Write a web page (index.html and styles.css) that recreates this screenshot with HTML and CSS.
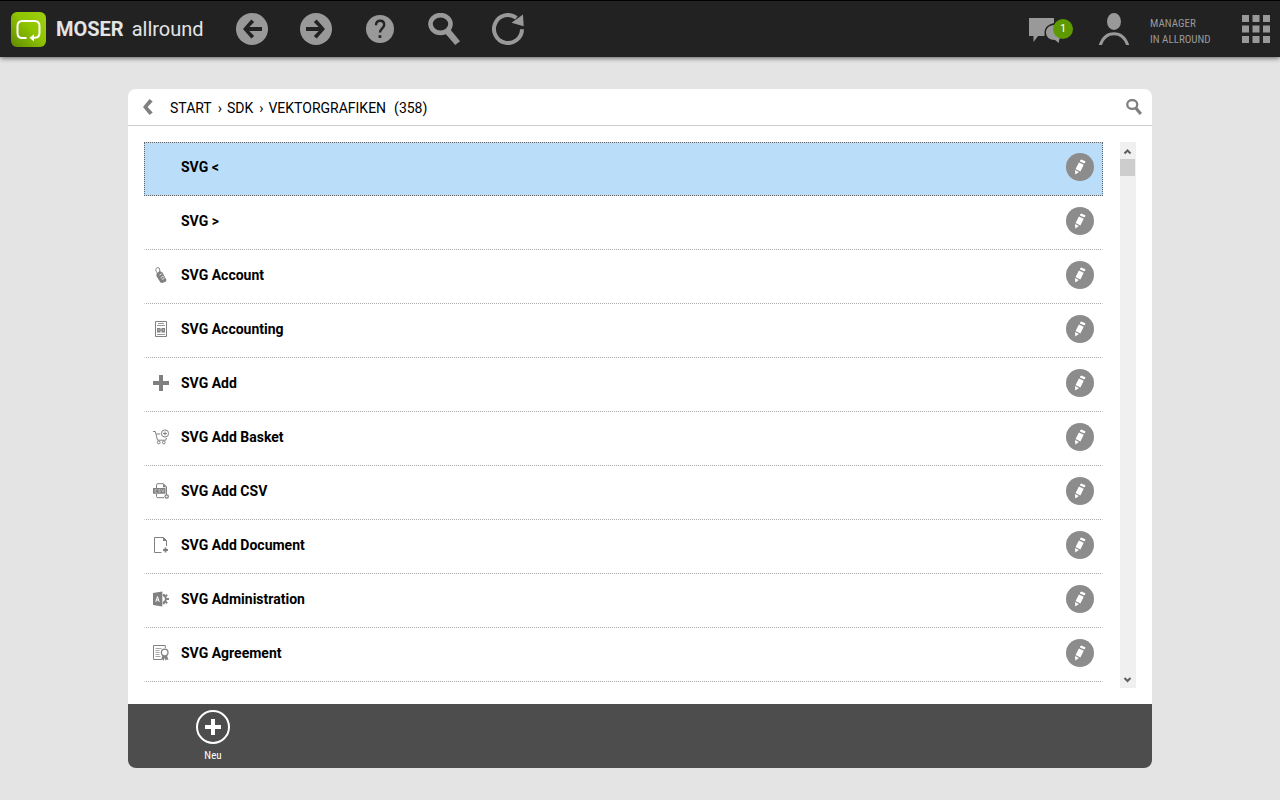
FILE: index.html
```html
<!DOCTYPE html>
<html lang="de">
<head>
    <meta charset="UTF-8">
    <meta name="viewport" content="width=device-width, initial-scale=1.0">
    <title>MOSER allround</title>
    <link rel="stylesheet" href="styles.css">
</head>
<body>
    <svg class="sprite" aria-hidden="true">
        <symbol id="pencil" viewBox="0 0 28 28">
            <path d="M14 7.400l1.300-1 4 1.900-.2 1.700-1.200.3-3.900-1.800z M12.900 9.400l4.800 2.300-3.300 6.700-4.800-2.300z M9 17l3.900 1.900-3.600 2.600z"/>
        </symbol>
        <symbol id="magnifier" viewBox="0 0 32 32">
            <ellipse cx="12.5" cy="11" rx="10" ry="8.9" fill="none" stroke="currentColor" stroke-width="4.6"/>
            <path d="M16.2 19.2l5.4-3.6 10.4 12.6-4.8 3.8z"/>
        </symbol>
    </svg>

    <header class="topbar">
        <a class="brand" href="#">
            <svg class="logo" viewBox="0 0 35 35" aria-hidden="true">
                <defs>
                    <linearGradient id="logoFill" x1="0" y1="1" x2="1" y2="0">
                        <stop offset="0" stop-color="#5f8a00"/>
                        <stop offset="0.55" stop-color="#8fc400"/>
                        <stop offset="1" stop-color="#9fd010"/>
                    </linearGradient>
                </defs>
                <rect width="35" height="35" rx="6" fill="url(#logoFill)"/>
                <path d="M15.500 26H11.500Q6.500 26 6.500 21V14Q6.500 9 11.500 9H23.500Q28.500 9 28.500 14V21Q28.500 25.500 24 25.700H21.500" fill="none" stroke="#fff" stroke-width="2"/>
                <path d="M18.500 25.800l4.500-3.600v7.200z" fill="#fff"/>
            </svg>
            <span class="brand-name"><strong>MOSER</strong> allround</span>
        </a>
        <nav class="tools">
            <button class="icon-button" type="button" aria-label="Zurück">
                <svg viewBox="0 0 32 32"><circle cx="16" cy="16" r="16"/><path class="dark" d="M26 14v4H13.300l4.900 5-2.900 2.500L7 16l8.300-9.500 2.900 2.500-4.900 5z"/></svg>
            </button>
            <button class="icon-button" type="button" aria-label="Vorwärts">
                <svg viewBox="0 0 32 32"><circle cx="16" cy="16" r="16"/><path class="dark" d="M6 14v4h12.700l-4.900 5 2.900 2.500L25 16l-8.300-9.500L13.800 9l4.900 5z"/></svg>
            </button>
            <button class="icon-button" type="button" aria-label="Hilfe">
                <svg viewBox="0 0 32 32"><circle cx="16" cy="16" r="14"/><path d="M12 12.200c0-3 1.600-4.500 4.100-4.500s4.100 1.500 4.100 4c0 3.600-4.200 3.700-4.200 7.800" fill="none" stroke="#222" stroke-width="2.400"/><rect class="dark" x="14.600" y="22.200" width="2.700" height="2.700"/></svg>
            </button>
            <button class="icon-button" type="button" aria-label="Suchen">
                <svg><use href="#magnifier"/></svg>
            </button>
            <button class="icon-button" type="button" aria-label="Aktualisieren">
                <svg viewBox="0 0 32 32"><path d="M30 16.200A14 14 0 1 1 24.500 4.900" fill="none" stroke="currentColor" stroke-width="4"/><path d="M31 1.500l.7 11.700-12.200-3.400z"/></svg>
            </button>
        </nav>
        <div class="account">
            <button class="chat-button" type="button" aria-label="Nachrichten">
                <svg viewBox="0 0 34 26"><path d="M0 1h25v5Q16 8 15.500 19H9l-4.500 6V19H0z"/><path d="M26 8c5.500 0 9 3 9 7.500 0 3-1.500 4.500-4.500 6.200l-.8 4.300-3.700-3c-5.500 0-9-3-9-7.500S20.500 8 26 8z" stroke="#222" stroke-width="3" paint-order="stroke"/></svg>
                <span class="badge">1</span>
            </button>
            <button class="icon-button" type="button" aria-label="Benutzer">
                <svg viewBox="0 0 32 32"><ellipse cx="16" cy="8.500" rx="7" ry="8.500"/><path d="M2.200 32.500Q6 20.800 16 20.800T29.800 32.500" fill="none" stroke="currentColor" stroke-width="3"/></svg>
            </button>
            <p class="user">MANAGER<br>IN ALLROUND</p>
            <button class="apps-button" type="button" aria-label="Anwendungen">
                <svg viewBox="0 0 28 28"><path d="M0 0h7v7H0zM10.500 0h7v7h-7zM21 0h7v7h-7zM0 10.500h7v7H0zM10.500 10.500h7v7h-7zM21 10.500h7v7h-7zM0 21h7v7H0zM10.500 21h7v7h-7zM21 21h7v7h-7z"/></svg>
            </button>
        </div>
    </header>

    <main class="panel">
        <div class="panel-header">
            <button class="small-button" type="button" aria-label="Zurück">
                <svg viewBox="0 0 16 16"><path d="M9.500 0l3.200 2.600L7.600 8l5.100 5.400L9.500 16 3 8z"/></svg>
            </button>
            <nav class="breadcrumb">
                <a href="#">START</a><span>›</span><a href="#">SDK</a><span>›</span><a href="#">VEKTORGRAFIKEN</a>
                <span class="count">(358)</span>
            </nav>
            <button class="small-button" type="button" aria-label="Suchen">
                <svg><use href="#magnifier"/></svg>
            </button>
        </div>

        <div class="content">
            <ul class="list">
                <li class="row selected">
                    <span class="row-icon"></span>
                    <a href="#">SVG &lt;</a>
                    <button class="edit" type="button" aria-label="Bearbeiten"><svg><use href="#pencil"/></svg></button>
                </li>
                <li class="row">
                    <span class="row-icon"></span>
                    <a href="#">SVG &gt;</a>
                    <button class="edit" type="button" aria-label="Bearbeiten"><svg><use href="#pencil"/></svg></button>
                </li>
                <li class="row">
                    <svg class="row-icon" viewBox="0 0 16 16"><path d="M4.500 6C2 4 2.500.7 4.700.6S7 3 6.500 5.500" fill="none" stroke="currentColor"/><path d="M3.500 6.500L6.800 4l2.700 1.500 4 7.500-.8 1.700L9 16l-1.600-.6-4-6.500z"/><path d="M6.500 8l2.300-1.200M8.400 11.500c-.8-2 2-3 2.600-1.200M9 12.500l2.500-1.300" fill="none" stroke="#fff" stroke-width=".8"/></svg>
                    <a href="#">SVG Account</a>
                    <button class="edit" type="button" aria-label="Bearbeiten"><svg><use href="#pencil"/></svg></button>
                </li>
                <li class="row">
                    <svg class="row-icon" viewBox="0 0 16 16"><path d="M2.500.500h11v15h-11z" fill="none" stroke="currentColor"/><path d="M5 2.500h6M4 4.500h8M4 13.500h8" fill="none" stroke="currentColor" stroke-width=".8"/><path d="M4 7h3.500v1.500h1V7H12v4.500H8.500V9.700h-1v1.800H4z"/><path d="M5.800 8v2M10.200 8v2" stroke="#fff" stroke-width=".5"/></svg>
                    <a href="#">SVG Accounting</a>
                    <button class="edit" type="button" aria-label="Bearbeiten"><svg><use href="#pencil"/></svg></button>
                </li>
                <li class="row">
                    <svg class="row-icon" viewBox="0 0 16 16"><path d="M6 0h4v6h6v4h-6v6H6v-6H0V6h6z"/></svg>
                    <a href="#">SVG Add</a>
                    <button class="edit" type="button" aria-label="Bearbeiten"><svg><use href="#pencil"/></svg></button>
                </li>
                <li class="row">
                    <svg class="row-icon line" viewBox="0 0 16 16"><path d="M0 2.500h2.300l2.200 8.700h8.200l.8-2.200M3.300 5h4"/><circle cx="12" cy="4.500" r="3.600"/><path d="M12 2.500v4M10 4.500h4"/><circle cx="5.700" cy="13.500" r="1.400"/><circle cx="10.800" cy="13.500" r="1.400"/></svg>
                    <a href="#">SVG Add Basket</a>
                    <button class="edit" type="button" aria-label="Bearbeiten"><svg><use href="#pencil"/></svg></button>
                </li>
                <li class="row">
                    <svg class="row-icon" viewBox="0 0 16 16"><path d="M3.500 5V2.200Q3.500.700 5 .700h5.500l3 3.200V12M3.500 11v2.500q0 1.200 1.500 1.200h6" fill="none" stroke="currentColor"/><path d="M10 .700l3.500 3.500H10zM0 5h12.500v5.700H0z"/><path d="M4 6.500H2v2.700h2M7.500 6.500H5.700v1.300h1.500v1.400H5.400M8.700 6.200l1.200 3 1.200-3" fill="none" stroke="#fff" stroke-width=".4"/><circle cx="13.700" cy="13.500" r="2.300"/><path d="M13.700 12v3M12.200 13.500h3" stroke="#fff" stroke-width=".6"/></svg>
                    <a href="#">SVG Add CSV</a>
                    <button class="edit" type="button" aria-label="Bearbeiten"><svg><use href="#pencil"/></svg></button>
                </li>
                <li class="row">
                    <svg class="row-icon" viewBox="0 0 16 16"><path d="M8.500 15.500h-7V.500h9l3 3V9" fill="none" stroke="currentColor"/><path d="M10 0l4 4h-4z"/><path d="M12.500 10.500v5M10 13h5" stroke="currentColor" stroke-width="1.800"/></svg>
                    <a href="#">SVG Add Document</a>
                    <button class="edit" type="button" aria-label="Bearbeiten"><svg><use href="#pencil"/></svg></button>
                </li>
                <li class="row">
                    <svg class="row-icon" viewBox="0 0 16 16"><path d="M0 2l9.300-1.500v15L0 14z"/><path d="M2.800 10.800l1.700-5.300 1.700 5.300M3.300 9h2.400" fill="none" stroke="#fff"/><path d="M10.300 4.700a3.400 3.400 0 0 1 0 6.600" fill="none" stroke="currentColor" stroke-width="1.800"/><path d="M10.800 3v2M12.500 5.200l1.700-1.300M13.300 8H16M12.500 10.800l1.700 1.300M10.800 11v2.200" fill="none" stroke="currentColor" stroke-width="2"/></svg>
                    <a href="#">SVG Administration</a>
                    <button class="edit" type="button" aria-label="Bearbeiten"><svg><use href="#pencil"/></svg></button>
                </li>
                <li class="row">
                    <svg class="row-icon" viewBox="0 0 16 16"><path d="M8.500 14.500h-8V.500h11.800V3" fill="none" stroke="currentColor"/><path d="M2.500 3.500h6M2.500 5.500h4M2.500 7.500h4M2.500 9.500h4M2.500 11.500h5" stroke="currentColor" stroke-width=".7"/><circle cx="11.700" cy="7.500" r="3.300" fill="none" stroke="currentColor" stroke-width="1.300"/><path d="M9.500 10.500l2.200.8 2.200-.8 1.600 4.500-1.900-.4-.9 1.200-1-3-1 3-.9-1.200-1.900.4z"/></svg>
                    <a href="#">SVG Agreement</a>
                    <button class="edit" type="button" aria-label="Bearbeiten"><svg><use href="#pencil"/></svg></button>
                </li>
            </ul>
            <div class="scrollbar">
                <button type="button" aria-label="Nach oben"><svg viewBox="0 0 16 16"><path d="M4.500 10.500L7.500 7.500l3 3"/></svg></button>
                <div class="track"><div class="thumb"></div></div>
                <button type="button" aria-label="Nach unten"><svg viewBox="0 0 16 16"><path d="M4.500 6l3 3 3-3"/></svg></button>
            </div>
        </div>

        <footer class="actions">
            <button class="action" type="button">
                <svg viewBox="0 0 34 34"><circle cx="17" cy="17" r="16" fill="none" stroke="currentColor" stroke-width="2"/><path d="M15 9h4v6h6v4h-6v6h-4v-6H9v-4h6z"/></svg>
                Neu
            </button>
        </footer>
    </main>
</body>
</html>
```
FILE: styles.css
```css
* {
    box-sizing: border-box;
}
body {
    margin: 0;
    height: 100vh;
    display: flex;
    flex-direction: column;
    font-family: Roboto, "Liberation Sans", sans-serif;
    font-size: 14px;
    background-color: #e4e4e4;
    color: #000;
}
a {
    color: inherit;
    text-decoration: none;
}
button {
    display: block;
    flex: none;
    margin: 0;
    padding: 0;
    border: 0;
    background: none;
    color: inherit;
    font: inherit;
    cursor: pointer;
}
svg {
    display: block;
    width: 100%;
    height: 100%;
    fill: currentColor;
}
.sprite {
    position: absolute;
    width: 0;
    height: 0;
}

/* top bar */
.topbar {
    display: flex;
    align-items: center;
    flex: none;
    height: 57px;
    padding: 0 10px 0 11px;
    border-top: 1px solid #000;
    background-color: #222;
    color: #999;
    box-shadow: 0 1px 5px rgba(0,0,0,0.6);
}
.brand {
    display: flex;
    align-items: center;
    gap: 10px;
    width: 225px;
}
.logo {
    width: 35px;
    height: 35px;
}
.brand-name {
    font-size: 20px;
    color: #e4e4e4;
    white-space: pre;
}
.brand-name strong {
    margin-right: 3px;
}
.tools {
    display: flex;
    gap: 32px;
}
.icon-button {
    width: 32px;
    height: 32px;
}
.dark {
    fill: #222;
}
.account {
    display: flex;
    align-items: center;
    margin-left: auto;
}
.chat-button {
    position: relative;
    width: 44px;
    height: 24px;
    margin-right: 25px;
}
.chat-button svg {
    width: 34px;
    height: 26px;
}
.badge {
    position: absolute;
    top: 2px;
    right: 0;
    width: 20px;
    height: 20px;
    border-radius: 50%;
    background-color: #5f9900;
    color: #fff;
    font-size: 11px;
    line-height: 20px;
    text-align: center;
}
.user {
    width: 92px;
    margin: 6px 0 0 20px;
    font-family: "Roboto Condensed", Roboto, sans-serif;
    font-size: 11px;
    line-height: 16px;
    white-space: nowrap;
}
.apps-button {
    width: 28px;
    height: 28px;
}

/* panel */
.panel {
    display: flex;
    flex-direction: column;
    flex: 1;
    min-height: 0;
    margin: 32px 10%;
    border-radius: 8px;
    background-color: #fff;
    overflow: hidden;
}
.panel-header {
    display: flex;
    align-items: center;
    flex: none;
    height: 37px;
    padding: 0 10px 0 12px;
    border-bottom: 1px solid #ccc;
}
.small-button {
    width: 16px;
    height: 16px;
    color: #808080;
}
.breadcrumb {
    display: flex;
    flex: 1;
    gap: 5px;
    margin-left: 14px;
    padding-top: 2px;
    line-height: 20px;
}
.breadcrumb span {
    margin-left: 1px;
}
.breadcrumb .count {
    margin-left: 3px;
}
.content {
    display: flex;
    flex: 1;
    gap: 17px;
    min-height: 0;
    padding: 16px;
}
.list {
    flex: 1;
    margin: 0;
    padding: 0;
    list-style: none;
    overflow: hidden;
}
.row {
    display: flex;
    align-items: center;
    height: 54px;
    padding: 0 8px 4px;
    border: 1px solid transparent;
    border-bottom: 1px dotted #aaa;
    font-weight: bold;
}
.row.selected {
    border: 1px dotted #666;
    background-color: #badefa;
}
.row a {
    flex: 1;
    margin-left: 12px;
}
.row-icon {
    flex: none;
    width: 16px;
    height: 16px;
    color: #808080;
}
.line {
    fill: none;
    stroke: currentColor;
}
.edit {
    width: 28px;
    height: 28px;
    border-radius: 50%;
    background-color: #8c8c8c;
    color: #fff;
}
.scrollbar {
    display: flex;
    flex-direction: column;
    flex: none;
    width: 16px;
    background-color: #f0f0f0;
}
.scrollbar button {
    height: 17px;
}
.scrollbar svg {
    height: 16px;
    fill: none;
    stroke: #606060;
    stroke-width: 2;
}
.track {
    flex: 1;
}
.thumb {
    width: 15px;
    height: 17px;
    background-color: #cdcdcd;
}

/* bottom actions */
.actions {
    display: flex;
    flex: none;
    height: 64px;
    padding: 6px 53px;
    background-color: #4d4d4d;
    color: #fff;
}
.action {
    width: 64px;
    font-family: "Roboto Condensed", Roboto, sans-serif;
    font-size: 11px;
    line-height: 14px;
}
.action svg {
    width: 34px;
    height: 34px;
    margin: 0 auto 5px;
}
```
